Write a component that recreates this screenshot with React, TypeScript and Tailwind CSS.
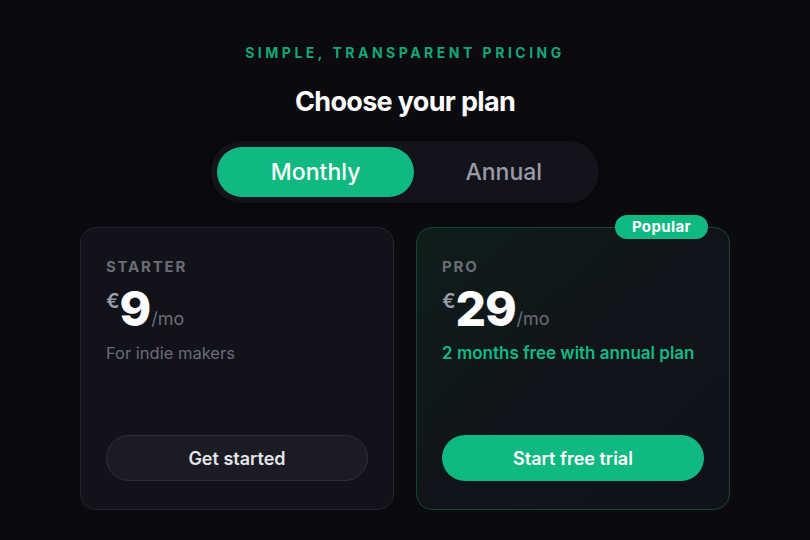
import React, { useState } from 'react'

type Plan = {
  name: string
  price: string
  note: string
  highlight?: boolean
  cta: string
}

const plans: Plan[] = [
  { name: 'Starter', price: '9', note: 'For indie makers', cta: 'Get started' },
  { name: 'Pro', price: '29', note: '2 months free with annual plan', cta: 'Start free trial', highlight: true },
]

const PlanCard: React.FC<{ plan: Plan }> = ({ plan }) => {
  return (
    <div
      className={
        plan.highlight
          ? 'relative flex h-[283px] w-[314px] flex-col rounded-2xl border border-[#174634] bg-gradient-to-br from-[#0f1d1a] via-[#10141a] to-[#11121a] px-[25px] pt-[29px] pb-[28px]'
          : 'relative flex h-[283px] w-[314px] flex-col rounded-2xl border border-[#23242c] bg-[#11121a] px-[25px] pt-[29px] pb-[28px]'
      }
    >
      {/* Badge */}
      {plan.highlight && (
        <span className="absolute -top-[13px] right-[21px] rounded-full bg-[#10b981] px-[17px] py-[2px] text-[15px] font-bold leading-5 tracking-wide text-white">
          Popular
        </span>
      )}

      <div className="text-[15px] font-bold uppercase leading-5 tracking-[0.12em] text-[#6b6d76]">{plan.name}</div>

      <div className="mt-[6px] flex items-end">
        <span className="mb-[24px] text-[20px] font-semibold leading-none text-[#9a9ca6]">€</span>
        <span className="text-[48px] font-extrabold leading-[52px] tracking-tight text-white">{plan.price}</span>
        <span className="mb-[4px] ml-[1px] text-[18px] leading-6 text-[#6b6d76]">/mo</span>
      </div>

      <div
        className={
          plan.highlight
            ? 'mt-[6px] text-[17px] font-semibold leading-6 text-[#10b981]'
            : 'mt-[6px] text-[16.5px] leading-6 text-[#6b6d76]'
        }
      >
        {plan.note}
      </div>

      <button
        className={
          plan.highlight
            ? 'mt-auto h-[46px] w-full rounded-full bg-[#10b981] text-[18px] font-semibold text-white'
            : 'mt-auto h-[46px] w-full rounded-full border border-[#2e2f37] bg-[#1b1c23] text-[18px] font-semibold text-[#e4e5ea]'
        }
      >
        {plan.cta}
      </button>
    </div>
  )
}

const App: React.FC = () => {
  const [billing, setBilling] = useState<'monthly' | 'annual'>('monthly')

  return (
    <div
      className="flex min-h-[540px] w-full flex-col items-center bg-[#0a0a0f] pt-[43px]"
      style={{ fontFamily: 'Inter, "Noto Sans", sans-serif' }}
    >
      <div className="text-[14px] font-bold uppercase leading-5 tracking-[0.25em] text-[#10a877]">
        Simple, transparent pricing
      </div>
      <h1 className="mt-[23px] text-[27px] font-bold leading-8 tracking-tight text-white">Choose your plan</h1>

      {/* Billing toggle */}
      <div className="mt-[23px] flex rounded-full bg-[#13141b] p-[6px] shadow-[0_0_12px_rgba(0,0,0,0.4)]">
        <button
          onClick={() => setBilling('monthly')}
          className={
            billing === 'monthly'
              ? 'h-[50px] rounded-full bg-[#10b981] px-[54px] text-[23px] font-medium text-white'
              : 'h-[50px] rounded-full px-[54px] text-[23px] font-medium text-[#9a9ba6]'
          }
        >
          Monthly
        </button>
        <button
          onClick={() => setBilling('annual')}
          className={
            billing === 'annual'
              ? 'h-[50px] rounded-full bg-[#10b981] px-[51px] text-[23px] font-medium text-white'
              : 'h-[50px] rounded-full px-[51px] text-[23px] font-medium text-[#9a9ba6]'
          }
        >
          Annual
        </button>
      </div>

      {/* Plans */}
      <div className="mt-[24px] flex gap-[22px]">
        {plans.map((plan) => (
          <PlanCard key={plan.name} plan={plan} />
        ))}
      </div>
    </div>
  )
}

export default App
